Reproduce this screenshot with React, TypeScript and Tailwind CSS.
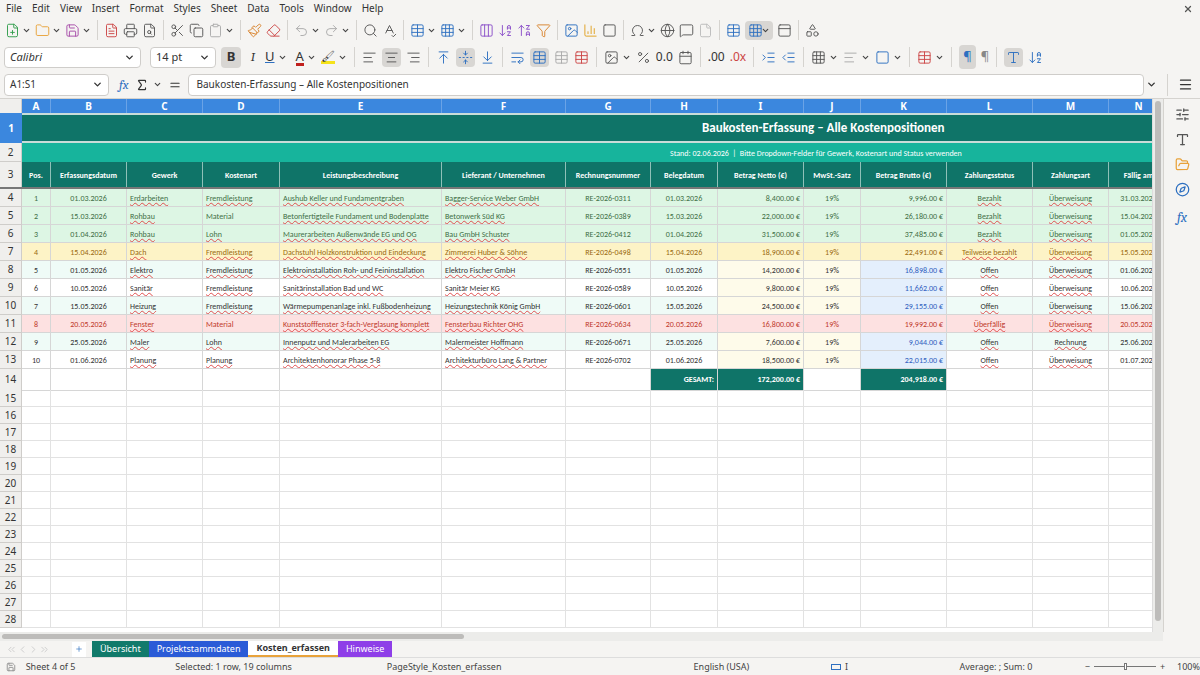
import React from "react";
import {
  FilePlus, Folder, Save, FileText, Printer, FileSearch, Scissors, Copy, Clipboard, Paintbrush, Eraser,
  Undo2, Redo2, Search, SpellCheck, Table, Grid3x3, ArrowDownAZ, ArrowUpZA, Filter, Image, BarChart3,
  Omega, Globe, MessageSquare, File, Columns3, PanelTop, Shapes, ChevronDown, AlignLeft, AlignCenter,
  AlignRight, ArrowUpToLine, FoldVertical, ArrowDownToLine, WrapText, Percent, Calendar, Indent, Outdent,
  Square, Menu, SlidersHorizontal, Type, FolderOpen, Compass, X, Sigma, Equal, ChevronsLeft, ChevronLeft, ChevronRight, ChevronsRight, Plus
} from "lucide-react";

const cols = [29, 76, 76, 77, 162, 124, 85, 67, 86, 57, 86, 86, 76, 60];
const letters = ["A","B","C","D","E","F","G","H","I","J","K","L","M","N"];
const tmpl = "grid-cols-[22px_29px_76px_76px_77px_162px_124px_85px_67px_86px_57px_86px_86px_76px_60px]";

type R = { d: string[]; t: string };
const rows: R[] = [
  { t: "g", d: ["1","01.03.2026","Erdarbeiten","Fremdleistung","Aushub Keller und Fundamentgraben","Bagger-Service Weber GmbH","RE-2026-0311","01.03.2026","8,400.00 €","19%","9,996.00 €","Bezahlt","Überweisung","31.03.2026"] },
  { t: "g", d: ["2","15.03.2026","Rohbau","Material","Betonfertigteile Fundament und Bodenplatte","Betonwerk Süd KG","RE-2026-0389","15.03.2026","22,000.00 €","19%","26,180.00 €","Bezahlt","Überweisung","15.04.2026"] },
  { t: "g", d: ["3","01.04.2026","Rohbau","Lohn","Maurerarbeiten Außenwände EG und OG","Bau GmbH Schuster","RE-2026-0412","01.04.2026","31,500.00 €","19%","37,485.00 €","Bezahlt","Überweisung","01.05.2026"] },
  { t: "y", d: ["4","15.04.2026","Dach","Fremdleistung","Dachstuhl Holzkonstruktion und Eindeckung","Zimmerei Huber & Söhne","RE-2026-0498","15.04.2026","18,900.00 €","19%","22,491.00 €","Teilweise bezahlt","Überweisung","15.05.2026"] },
  { t: "a", d: ["5","01.05.2026","Elektro","Fremdleistung","Elektroinstallation Roh- und Feininstallation","Elektro Fischer GmbH","RE-2026-0551","01.05.2026","14,200.00 €","19%","16,898.00 €","Offen","Überweisung","01.06.2026"] },
  { t: "w", d: ["6","10.05.2026","Sanitär","Fremdleistung","Sanitärinstallation Bad und WC","Sanitär Meier KG","RE-2026-0589","10.05.2026","9,800.00 €","19%","11,662.00 €","Offen","Überweisung","10.06.2026"] },
  { t: "a", d: ["7","15.05.2026","Heizung","Fremdleistung","Wärmepumpenanlage inkl. Fußbodenheizung","Heizungstechnik König GmbH","RE-2026-0601","15.05.2026","24,500.00 €","19%","29,155.00 €","Offen","Überweisung","15.06.2026"] },
  { t: "r", d: ["8","20.05.2026","Fenster","Material","Kunststofffenster 3-fach-Verglasung komplett","Fensterbau Richter OHG","RE-2026-0634","20.05.2026","16,800.00 €","19%","19,992.00 €","Überfällig","Überweisung","20.05.2026"] },
  { t: "a", d: ["9","25.05.2026","Maler","Lohn","Innenputz und Malerarbeiten EG","Malermeister Hoffmann","RE-2026-0671","25.05.2026","7,600.00 €","19%","9,044.00 €","Offen","Rechnung","25.06.2026"] },
  { t: "w", d: ["10","01.06.2026","Planung","Planung","Architektenhonorar Phase 5-8","Architekturbüro Lang & Partner","RE-2026-0702","01.06.2026","18,500.00 €","19%","22,015.00 €","Offen","Überweisung","01.07.2026"] },
];
const bgMap: Record<string, string> = { g: "bg-[#ddf6e4]", y: "bg-[#fdf3c6]", a: "bg-[#effbf7]", w: "bg-white", r: "bg-[#fde1e1]" };
const txMap: Record<string, string> = { g: "text-[#3f6f46]", y: "text-[#9a6a10]", a: "text-[#333]", w: "text-[#333]", r: "text-[#c0392b]" };
const align = ["text-center","text-center","text-left","text-left","text-left","text-left","text-center","text-center","text-right","text-center","text-right","text-center","text-center","text-center"];
const heads = ["Pos.","Erfassungsdatum","Gewerk","Kostenart","Leistungsbeschreibung","Lieferant / Unternehmen","Rechnungsnummer","Belegdatum","Betrag Netto (€)","MwSt.-Satz","Betrag Brutto (€)","Zahlungsstatus","Zahlungsart","Fällig am"];

const I = ({ c: C, cl = "text-[#555]" }: { c: any; cl?: string }) => <C size={15} strokeWidth={1.5} className={cl} />;
const Dd = () => <ChevronDown size={9} strokeWidth={3} className="text-[#444] -ml-0.5" />;
const Sep = () => <div className="w-px h-5 bg-[#d5d3cf] mx-[2px]" />;

export default function App() {
  const ui = { fontFamily: '"Noto Sans", "Open Sans", sans-serif' };
  const cell = { fontFamily: '"Carlito", "Lato", "Liberation Sans", sans-serif' };
  return (
    <div className="w-[1200px] h-[675px] bg-[#f5f4f2] overflow-hidden flex flex-col text-[#333]" style={ui}>
      {/* menu */}
      <div className="h-[17px] flex items-center px-[6px] gap-[10px] text-[10px] text-[#333] relative">
        {["File","Edit","View","Insert","Format","Styles","Sheet","Data","Tools","Window","Help"].map(m => <span key={m}>{m}</span>)}
        <X size={10} strokeWidth={3} className="absolute right-[7px] top-[4px] text-[#555]" />
      </div>
      {/* toolbar 1 */}
      <div className="h-[26px] flex items-center px-[5px] gap-[4px]">
        <I c={FilePlus} cl="text-[#2e9c4a]" /><Dd /><I c={Folder} cl="text-[#e8a23a]" /><Dd /><I c={Save} cl="text-[#a54aa8]" /><Dd /><Sep />
        <I c={FileText} cl="text-[#c44]" /><I c={Printer} /><I c={FileSearch} /><Sep />
        <I c={Scissors} /><I c={Copy} /><I c={Clipboard} cl="text-[#aaa]" /><Dd /><Sep />
        <I c={Paintbrush} cl="text-[#d9822b]" /><I c={Eraser} cl="text-[#c44]" /><Sep />
        <I c={Undo2} cl="text-[#aaa]" /><Dd /><I c={Redo2} cl="text-[#aaa]" /><Dd /><Sep />
        <I c={Search} /><I c={SpellCheck} /><Sep />
        <I c={Table} cl="text-[#2d6fc0]" /><Dd /><I c={Grid3x3} cl="text-[#2d6fc0]" /><Dd /><Sep />
        <I c={Columns3} cl="text-[#8a4ec9]" /><I c={ArrowDownAZ} cl="text-[#8a4ec9]" /><I c={ArrowUpZA} cl="text-[#8a4ec9]" /><I c={Filter} cl="text-[#d9822b]" /><Sep />
        <I c={Image} cl="text-[#2d6fc0]" /><I c={BarChart3} cl="text-[#e0a020]" /><I c={Square} /><Sep />
        <I c={Omega} /><Dd /><I c={Globe} /><I c={MessageSquare} /><I c={File} cl="text-[#bbb]" /><Sep />
        <I c={Table} cl="text-[#2d6fc0]" />
        <div className="bg-[#d8d6d3] rounded px-[3px] py-[2px] flex items-center"><I c={Grid3x3} cl="text-[#2d6fc0]" /><Dd /></div>
        <I c={PanelTop} /><Sep /><I c={Shapes} />
      </div>
      {/* toolbar 2 */}
      <div className="h-[28px] flex items-center px-[4px] gap-[5px]">
        <div className="w-[137px] h-[21px] bg-white border border-[#cfcdca] rounded-sm flex items-center justify-between pl-[5px] pr-[5px] text-[11px] italic">Calibri<ChevronDown size={11} strokeWidth={3} /></div>
        <div className="w-[66px] h-[21px] bg-white border border-[#cfcdca] rounded-sm flex items-center justify-between pl-[5px] pr-[5px] text-[11px] ml-[4px]">14 pt<ChevronDown size={11} strokeWidth={3} /></div>
        <div className="w-[20px] h-[21px] bg-[#d8d6d3] rounded flex items-center justify-center text-[13px] font-bold">B</div>
        <span className="w-[14px] text-center italic text-[13px] font-serif">I</span>
        <span className="text-[13px] underline decoration-[#2d6fc0]">U</span><Dd />
        <span className="text-[13px] border-b-[3px] border-[#c0201e] leading-[14px] ml-1">A</span><Dd />
        <span className="w-[14px] h-[14px] border-b-[3px] border-[#f5e21a] text-[11px] leading-[11px]">🖌</span><Dd /><Sep />
        <I c={AlignLeft} /><div className="bg-[#d8d6d3] rounded p-[2px]"><I c={AlignCenter} /></div><I c={AlignRight} /><Sep />
        <I c={ArrowUpToLine} cl="text-[#2d6fc0]" /><div className="bg-[#d8d6d3] rounded p-[2px]"><I c={FoldVertical} cl="text-[#2d6fc0]" /></div><I c={ArrowDownToLine} cl="text-[#2d6fc0]" /><Sep />
        <I c={WrapText} cl="text-[#2d6fc0]" /><div className="bg-[#d8d6d3] rounded p-[2px]"><I c={Table} cl="text-[#2d6fc0]" /></div><I c={Table} cl="text-[#aaa]" /><I c={Table} cl="text-[#c44]" /><Sep />
        <I c={Image} /><Dd /><I c={Percent} /><span className="text-[12px]">0.0</span><I c={Calendar} /><Sep />
        <span className="text-[12px]">.00</span><span className="text-[12px] text-[#c44]">.0x</span><Sep />
        <I c={Indent} cl="text-[#2d6fc0]" /><I c={Outdent} cl="text-[#2d6fc0]" /><Sep />
        <I c={Grid3x3} /><Dd /><I c={AlignLeft} cl="text-[#aaa]" /><Dd /><I c={Square} cl="text-[#2d6fc0]" /><Dd /><Sep />
        <I c={Table} cl="text-[#c44]" /><Dd /><Sep />
        <div className="bg-[#d8d6d3] rounded p-[2px] text-[13px] text-[#2d6fc0] px-1">¶</div><span className="text-[13px] text-[#888]">¶</span><Sep />
        <div className="bg-[#d8d6d3] rounded p-[2px]"><I c={Type} cl="text-[#2d6fc0]" /></div><I c={ArrowDownAZ} cl="text-[#2d6fc0]" />
      </div>
      {/* formula bar */}
      <div className="h-[28px] flex items-center px-[4px] gap-[6px] border-b border-[#d5d3cf]">
        <div className="w-[105px] h-[22px] bg-white border border-[#cfcdca] rounded-sm flex items-center justify-between px-[5px] text-[10px]">A1:S1<ChevronDown size={11} strokeWidth={3} /></div>
        <span className="text-[#2d6fc0] italic text-[13px] font-serif ml-1">fx</span>
        <Sigma size={14} /><Dd /><Equal size={14} />
        <div className="flex-1 h-[22px] bg-white border border-[#cfcdca] rounded-sm flex items-center px-[8px] text-[10px]">Baukosten-Erfassung – Alle Kostenpositionen</div>
        <ChevronDown size={11} strokeWidth={3} className="-ml-1" />
        <div className="w-px h-[22px] bg-[#d5d3cf] ml-1" />
        <Menu size={15} className="ml-1 mr-[3px]" />
      </div>
      {/* main */}
      <div className="flex flex-1 min-h-0">
        <div className="w-[1152px] flex flex-col min-h-0 overflow-hidden bg-white" style={cell}>
          <div className={`grid ${tmpl} h-[14px] shrink-0`}>
            <div className="bg-[#f0efed] border-r border-b border-[#cfcdca]" />
            {letters.map(l => <div key={l} className="bg-[#3b87de] text-white text-[10px] font-bold flex items-center justify-center border-r border-[#6aa3e6]" style={ui}>{l}</div>)}
          </div>
          <div className="flex h-[30px] shrink-0">
            <div className="w-[22px] bg-[#3b87de] text-white text-[10px] font-bold flex items-center justify-center" style={ui}>1</div>
            <div className="flex-1 bg-[#0f7468] border-y-2 border-[#c9ddd9] text-white font-bold text-[13px] flex items-center pl-[680px]">Baukosten-Erfassung – Alle Kostenpositionen</div>
          </div>
          <div className="flex h-[19px] shrink-0">
            <div className="w-[22px] bg-[#f0efed] border-r border-b border-[#cfcdca] text-[10px] flex items-center justify-center" style={ui}>2</div>
            <div className="flex-1 bg-[#17b49c] text-white text-[8px] flex items-center pl-[648px]">Stand: 02.06.2026 &nbsp;|&nbsp; Bitte Dropdown-Felder für Gewerk, Kostenart und Status verwenden</div>
          </div>
          <div className={`grid ${tmpl} h-[27px] shrink-0 border-b-2 border-[#777]`}>
            <div className="bg-[#f0efed] border-r border-[#cfcdca] text-[10px] flex items-center justify-center" style={ui}>3</div>
            {heads.map((h, i) => <div key={i} className="bg-[#0f7468] text-white text-[8px] font-bold flex items-center justify-center border-r border-[#8fc0b8] whitespace-nowrap overflow-hidden">{h}</div>)}
          </div>
          {rows.map((r, ri) => (
            <div key={ri} className={`grid ${tmpl} h-[18px] shrink-0`}>
              <div className="bg-[#f0efed] border-r border-b border-[#cfcdca] text-[10px] flex items-center justify-center" style={ui}>{ri + 4}</div>
              {r.d.map((v, ci) => {
                const soft = ri >= 4;
                let bg = bgMap[r.t];
                let tx = txMap[r.t];
                if (soft && r.t !== "r" && (ci === 8 || ci === 9)) bg = "bg-[#fefbea]";
                if (soft && r.t !== "r" && ci === 10) { bg = "bg-[#e4effc]"; tx = "text-[#3060c0]"; }
                const wavy = [2,4,11,12].includes(ci) || (ci === 3 && v !== "Material") || ci === 5;
                return <div key={ci} className={`${bg} ${tx} text-[8px] ${align[ci]} leading-[18px] px-[3px] whitespace-nowrap overflow-hidden border-r border-b border-[#d6d6d6]`}>
                  <span className={wavy ? "underline decoration-wavy decoration-[#e05050] decoration-[0.5px]" : ""}>{v}</span>
                </div>;
              })}
            </div>
          ))}
          <div className={`grid ${tmpl} h-[21px] shrink-0`}>
            <div className="bg-[#f0efed] border-r border-b border-[#cfcdca] text-[10px] flex items-center justify-center" style={ui}>14</div>
            {cols.map((_, ci) => {
              const teal = ci === 7 || ci === 8 || ci === 10;
              const txt = ci === 7 ? "GESAMT:" : ci === 8 ? "172,200.00 €" : ci === 10 ? "204,918.00 €" : "";
              return <div key={ci} className={`${teal ? "bg-[#0f7468] text-white font-bold" : "bg-white"} text-[8px] text-right px-[3px] leading-[21px] border-r border-b border-[#d6d6d6]`}>{txt}</div>;
            })}
          </div>
          {Array.from({ length: 14 }).map((_, i) => (
            <div key={i} className={`grid ${tmpl} h-[17px] shrink-0`}>
              <div className="bg-[#f0efed] border-r border-b border-[#cfcdca] text-[10px] flex items-center justify-center" style={ui}>{i + 15}</div>
              {cols.map((_, ci) => <div key={ci} className="border-r border-b border-[#e2e2e2]" />)}
            </div>
          ))}
        </div>
        <div className="w-[11px] bg-[#ececea] relative border-l border-[#ddd]">
          <div className="absolute left-[2px] top-[2px] w-[6px] h-[520px] rounded bg-[#bdbcba]" />
        </div>
        <div className="flex-1 bg-[#f5f4f2] border-l border-[#d5d3cf] flex flex-col items-center gap-[10px] pt-[8px]">
          <SlidersHorizontal size={15} className="text-[#555]" />
          <Type size={15} className="text-[#555]" />
          <FolderOpen size={15} className="text-[#e8a23a]" />
          <Compass size={15} className="text-[#2d6fc0]" />
          <span className="text-[#2d6fc0] italic font-serif text-[14px]">fx</span>
        </div>
      </div>
      <div className="h-[9px] bg-[#ececea] relative w-[1163px]">
        <div className="absolute left-[2px] top-[2px] w-[462px] h-[5px] rounded bg-[#bdbcba]" />
      </div>
      <div className="h-[17px] flex items-center text-[9px] border-b border-[#ddd]">
        <div className="flex items-center text-[#ccc] px-[6px] w-[72px]"><ChevronsLeft size={11} /><ChevronLeft size={11} /><ChevronRight size={11} /><ChevronsRight size={11} /></div>
        <div className="w-[14px] h-[15px] bg-white flex items-center justify-center mr-[6px]"><Plus size={8} className="text-[#2d6fc0]" /></div>
        <div className="h-[16px] px-[8px] bg-[#117a6b] text-white flex items-center">Übersicht</div>
        <div className="h-[16px] px-[8px] bg-[#2a5bd7] text-white flex items-center">Projektstammdaten</div>
        <div className="h-[16px] px-[8px] bg-white font-bold flex items-center border-b-2 border-[#e8a23a]">Kosten_erfassen</div>
        <div className="h-[16px] px-[8px] bg-[#8e3ee8] text-white flex items-center">Hinweise</div>
      </div>
      <div className="h-[17px] flex items-center text-[9px] text-[#444]">
        <div className="w-[22px] flex justify-center"><Save size={10} className="text-[#888]" /></div>
        <div className="w-[156px] pl-[4px]">Sheet 4 of 5</div>
        <div className="w-[215px]">Selected: 1 row, 19 columns</div>
        <div className="w-[265px]">PageStyle_Kosten_erfassen</div>
        <div className="w-[150px] text-center">English (USA)</div>
        <div className="w-[90px] flex justify-center items-center gap-1"><span className="w-[10px] h-[6px] border border-[#2d6fc0]" />I</div>
        <div className="w-[40px]" />
        <div className="w-[148px] text-center">Average: ; Sum: 0</div>
        <div className="flex-1 flex items-center gap-1 pl-[16px]">−<div className="w-[62px] h-px bg-[#777] relative"><div className="absolute left-[30px] -top-[3px] w-[3px] h-[7px] border border-[#777] bg-white" /></div>+<span className="ml-[8px]">100%</span></div>
      </div>
    </div>
  );
}
